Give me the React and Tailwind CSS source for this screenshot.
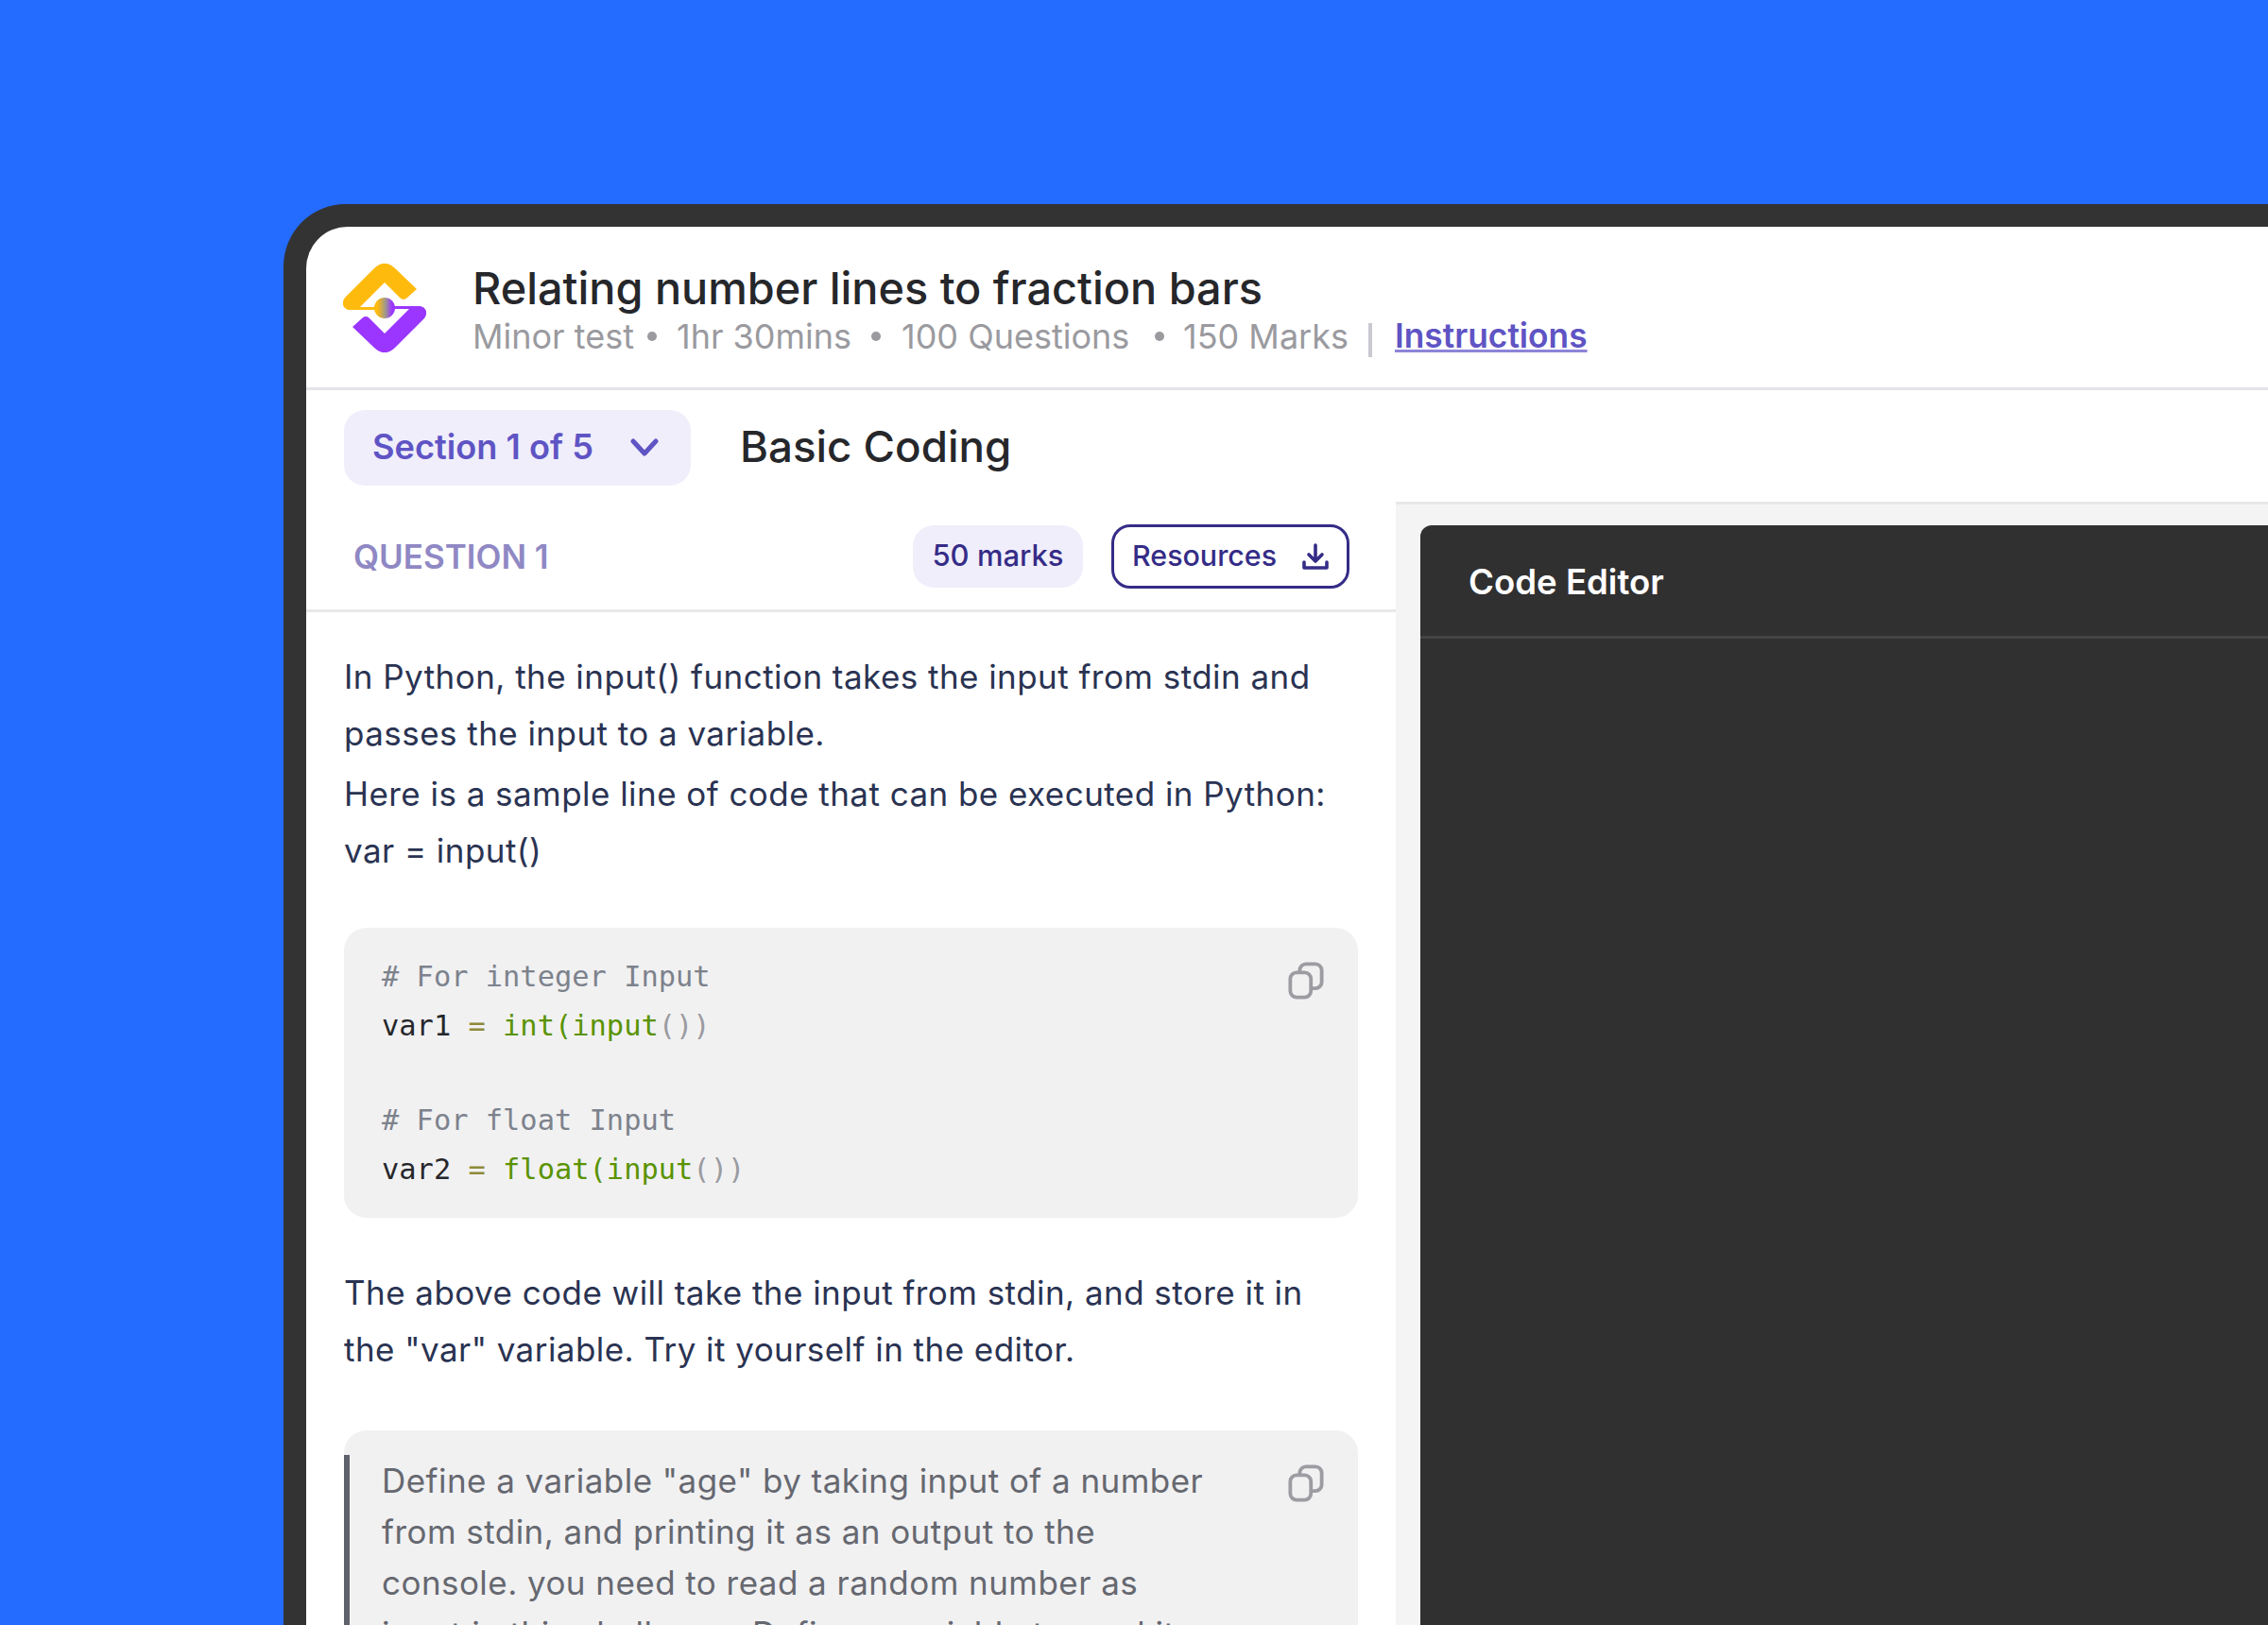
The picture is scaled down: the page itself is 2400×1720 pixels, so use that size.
const head = "font-['Inter','Liberation_Sans',sans-serif]";

function Copy({ className }) {
  return (
    <svg viewBox="0 0 40 42" className={className} fill="none" stroke="#9c9ca2" strokeWidth="4">
      <rect x="2.5" y="12" width="23" height="27.5" rx="7" />
      <path d="M13 12V9.5a7 7 0 0 1 7-7h10.5a7 7 0 0 1 7 7v13a7 7 0 0 1-7 7H25.5" />
    </svg>
  );
}

function Logo() {
  return (
    <svg viewBox="0 0 88 94" className="w-[88px] h-[94px] shrink-0 mt-[1px]">
      <defs>
        <linearGradient id="mid" x1="0" x2="1" y1="0" y2="0">
          <stop offset="0.15" stopColor="#ffbb0d" />
          <stop offset="0.55" stopColor="#9c988f" />
          <stop offset="0.85" stopColor="#9a36ff" />
        </linearGradient>
      </defs>
      <path d="M78 27 L55 5 C48 -2 40 -2 33 5 L3 35 C-3 41 0 49 8 49 L36 49 L36 46 L18 46 L44 20 L60 36 C63 39 66 38 68 36 Z" fill="#ffbb0d" />
      <path d="M10 67 L33 89 C40 96 48 96 55 89 L85 59 C91 53 88 45 80 45 L52 45 L52 48 L70 48 L44 74 L28 58 C25 55 22 56 20 58 Z" fill="#9a36ff" />
      <circle cx="44" cy="47" r="11" fill="url(#mid)" />
    </svg>
  );
}

const P = ({ children, className = "" }) => <p className={`text-[35px] tracking-[0.45px] leading-[60px] text-[#2a3352] ${className}`}>{children}</p>;

function Dot({ className = "" }) {
  return <span className={`w-[10px] h-[10px] rounded-full bg-[#9a9a9f] shrink-0 ${className}`} />;
}

export default function App() {
  return (
    <div className={`w-[2400px] h-[1720px] overflow-hidden bg-[#246bff] pl-[300px] pt-[216px] ${head}`}>
      <div className="w-[2100px] h-[1504px] bg-[#333333] rounded-tl-[66px] pl-6 pt-6">
        <div className="w-full h-full bg-white rounded-tl-[44px] overflow-hidden flex flex-col">
          <header className="h-[173px] shrink-0 border-b-[3px] border-[#e4e5e8] flex items-center pl-[39px] gap-[49px]">
            <Logo />
            <div className="flex flex-col pt-[9px]">
              <h1 className="text-[46.8px] leading-[52px] font-medium text-[#26272b] whitespace-nowrap">Relating number lines to fraction bars</h1>
              <div className="flex items-center text-[36px] leading-[50px] text-[#9a9a9f]">
                <span className="w-[172px] whitespace-nowrap">Minor test</span>
                <Dot className="mx-[13px]" />
                <span className="w-[184px] ml-[8px] whitespace-nowrap">1hr 30mins</span>
                <Dot className="mx-[22px]" />
                <span className="w-[245px] whitespace-nowrap">100 Questions</span>
                <Dot className="ml-[23px] mr-[20px]" />
                <span className="w-[171px] whitespace-nowrap">150 Marks</span>
                <span className="w-[4px] h-[36px] bg-[#c9c9d2] ml-[25px] mr-[24px] mt-[8px]" />
                <a className="text-[#5f54c4] underline decoration-[#8d85d8] font-semibold text-[35.3px] whitespace-nowrap">Instructions</a>
              </div>
            </div>
          </header>
          <div className="h-[118px] shrink-0 flex items-center pl-[40px] gap-[52px] pt-[3px]">
            <div className="w-[367px] h-[80px] rounded-[22px] bg-[#f0eefb] flex items-center justify-between pl-[30px] pr-[34px]">
              <span className="text-[36.2px] font-semibold text-[#5f54c4] whitespace-nowrap">Section 1 of 5</span>
              <svg viewBox="0 0 30 20" className="w-[30px] h-[20px]" fill="none" stroke="#5f54c4" strokeWidth="5" strokeLinecap="round" strokeLinejoin="round"><path d="M3 3l12 13L27 3" /></svg>
            </div>
            <h2 className="text-[45.7px] font-medium text-[#26272b]">Basic Coding</h2>
          </div>
          <div className="flex-1 flex min-h-0">
            <div className="w-[1153px] shrink-0">
              <div className="h-[117px] border-b-[3px] border-[#e8e8ea] flex items-center pl-[50px] pr-[49px] pt-[2px]">
                <span className="text-[35px] font-semibold text-[#8f88c4] flex-1">QUESTION 1</span>
                <span className="h-[66px] w-[180px] rounded-[22px] bg-[#f0eefb] flex items-center justify-center pb-[2px] text-[31px] font-medium text-[#352c87] mr-[30px]">50 marks</span>
                <span className="w-[252px] h-[68px] rounded-[20px] border-[3px] border-[#352c87] flex items-center justify-between pl-[19px] pr-[19px] text-[30.4px] font-medium text-[#352c87]">
                  Resources
                  <svg viewBox="0 0 28 28" className="w-[28px] h-[28px]" fill="none" stroke="#352c87" strokeWidth="3.6" strokeLinecap="round" strokeLinejoin="round"><path d="M14 2v16M7 12l7 7 7-7M2 20v6h24v-6" /></svg>
                </span>
              </div>
              <div className="px-[40px] pt-[38px]">
                <P>In Python, the input() function takes the input from stdin and<br />passes the input to a variable.</P>
                <P className="mt-[4px]">Here is a sample line of code that can be executed in Python:<br />var = input()</P>
                <div className="relative mt-[52px] h-[307px] rounded-[24px] bg-[#f1f1f2] pl-[40px] pt-[26px] font-['DejaVu_Sans_Mono',monospace] text-[30.4px] leading-[52px]">
                  <Copy className="absolute right-[36px] top-[36px] w-[38px] h-[40px]" />
                  <div className="text-[#7d828c]"># For integer Input</div>
                  <div className="text-[#26272b]">var1 <span className="text-[#8f8a3a]">=</span> <span className="text-[#5a9300]">int(input</span><span className="text-[#9a9a9f]">())</span></div>
                  <div className="h-[48px]" />
                  <div className="text-[#7d828c]"># For float Input</div>
                  <div className="text-[#26272b]">var2 <span className="text-[#8f8a3a]">=</span> <span className="text-[#5a9300]">float(input</span><span className="text-[#9a9a9f]">())</span></div>
                </div>
                <P className="mt-[49px]">The above code will take the input from stdin, and store it in<br />the "var" variable. Try it yourself in the editor.</P>
                <div className="relative mt-[56px] h-[400px] rounded-[24px] bg-[#f1f1f2] pt-[26px]">
                  <Copy className="absolute right-[36px] top-[36px] w-[38px] h-[40px]" />
                  <div className="border-l-[6px] border-[#5f626b] pl-[34px] text-[35px] tracking-[0.45px] leading-[54px] text-[#666870] whitespace-nowrap">
                    Define a variable "age" by taking input of a number<br />from stdin, and printing it as an output to the<br />console. you need to read a random number as<br />input in this challenge. Define a variable to read it.
                  </div>
                </div>
              </div>
            </div>
            <div className="flex-1 bg-[#f4f4f5] border-t-[3px] border-[#e8e8ea] pl-[26px] pt-[22px] flex flex-col">
              <div className="flex-1 bg-[#303030] rounded-tl-[12px]">
                <div className="h-[120px] border-b-[3px] border-[#444] flex items-center pl-[51px] pt-[4px] text-[36.6px] font-semibold text-white">Code Editor</div>
              </div>
            </div>
          </div>
        </div>
      </div>
    </div>
  );
}
